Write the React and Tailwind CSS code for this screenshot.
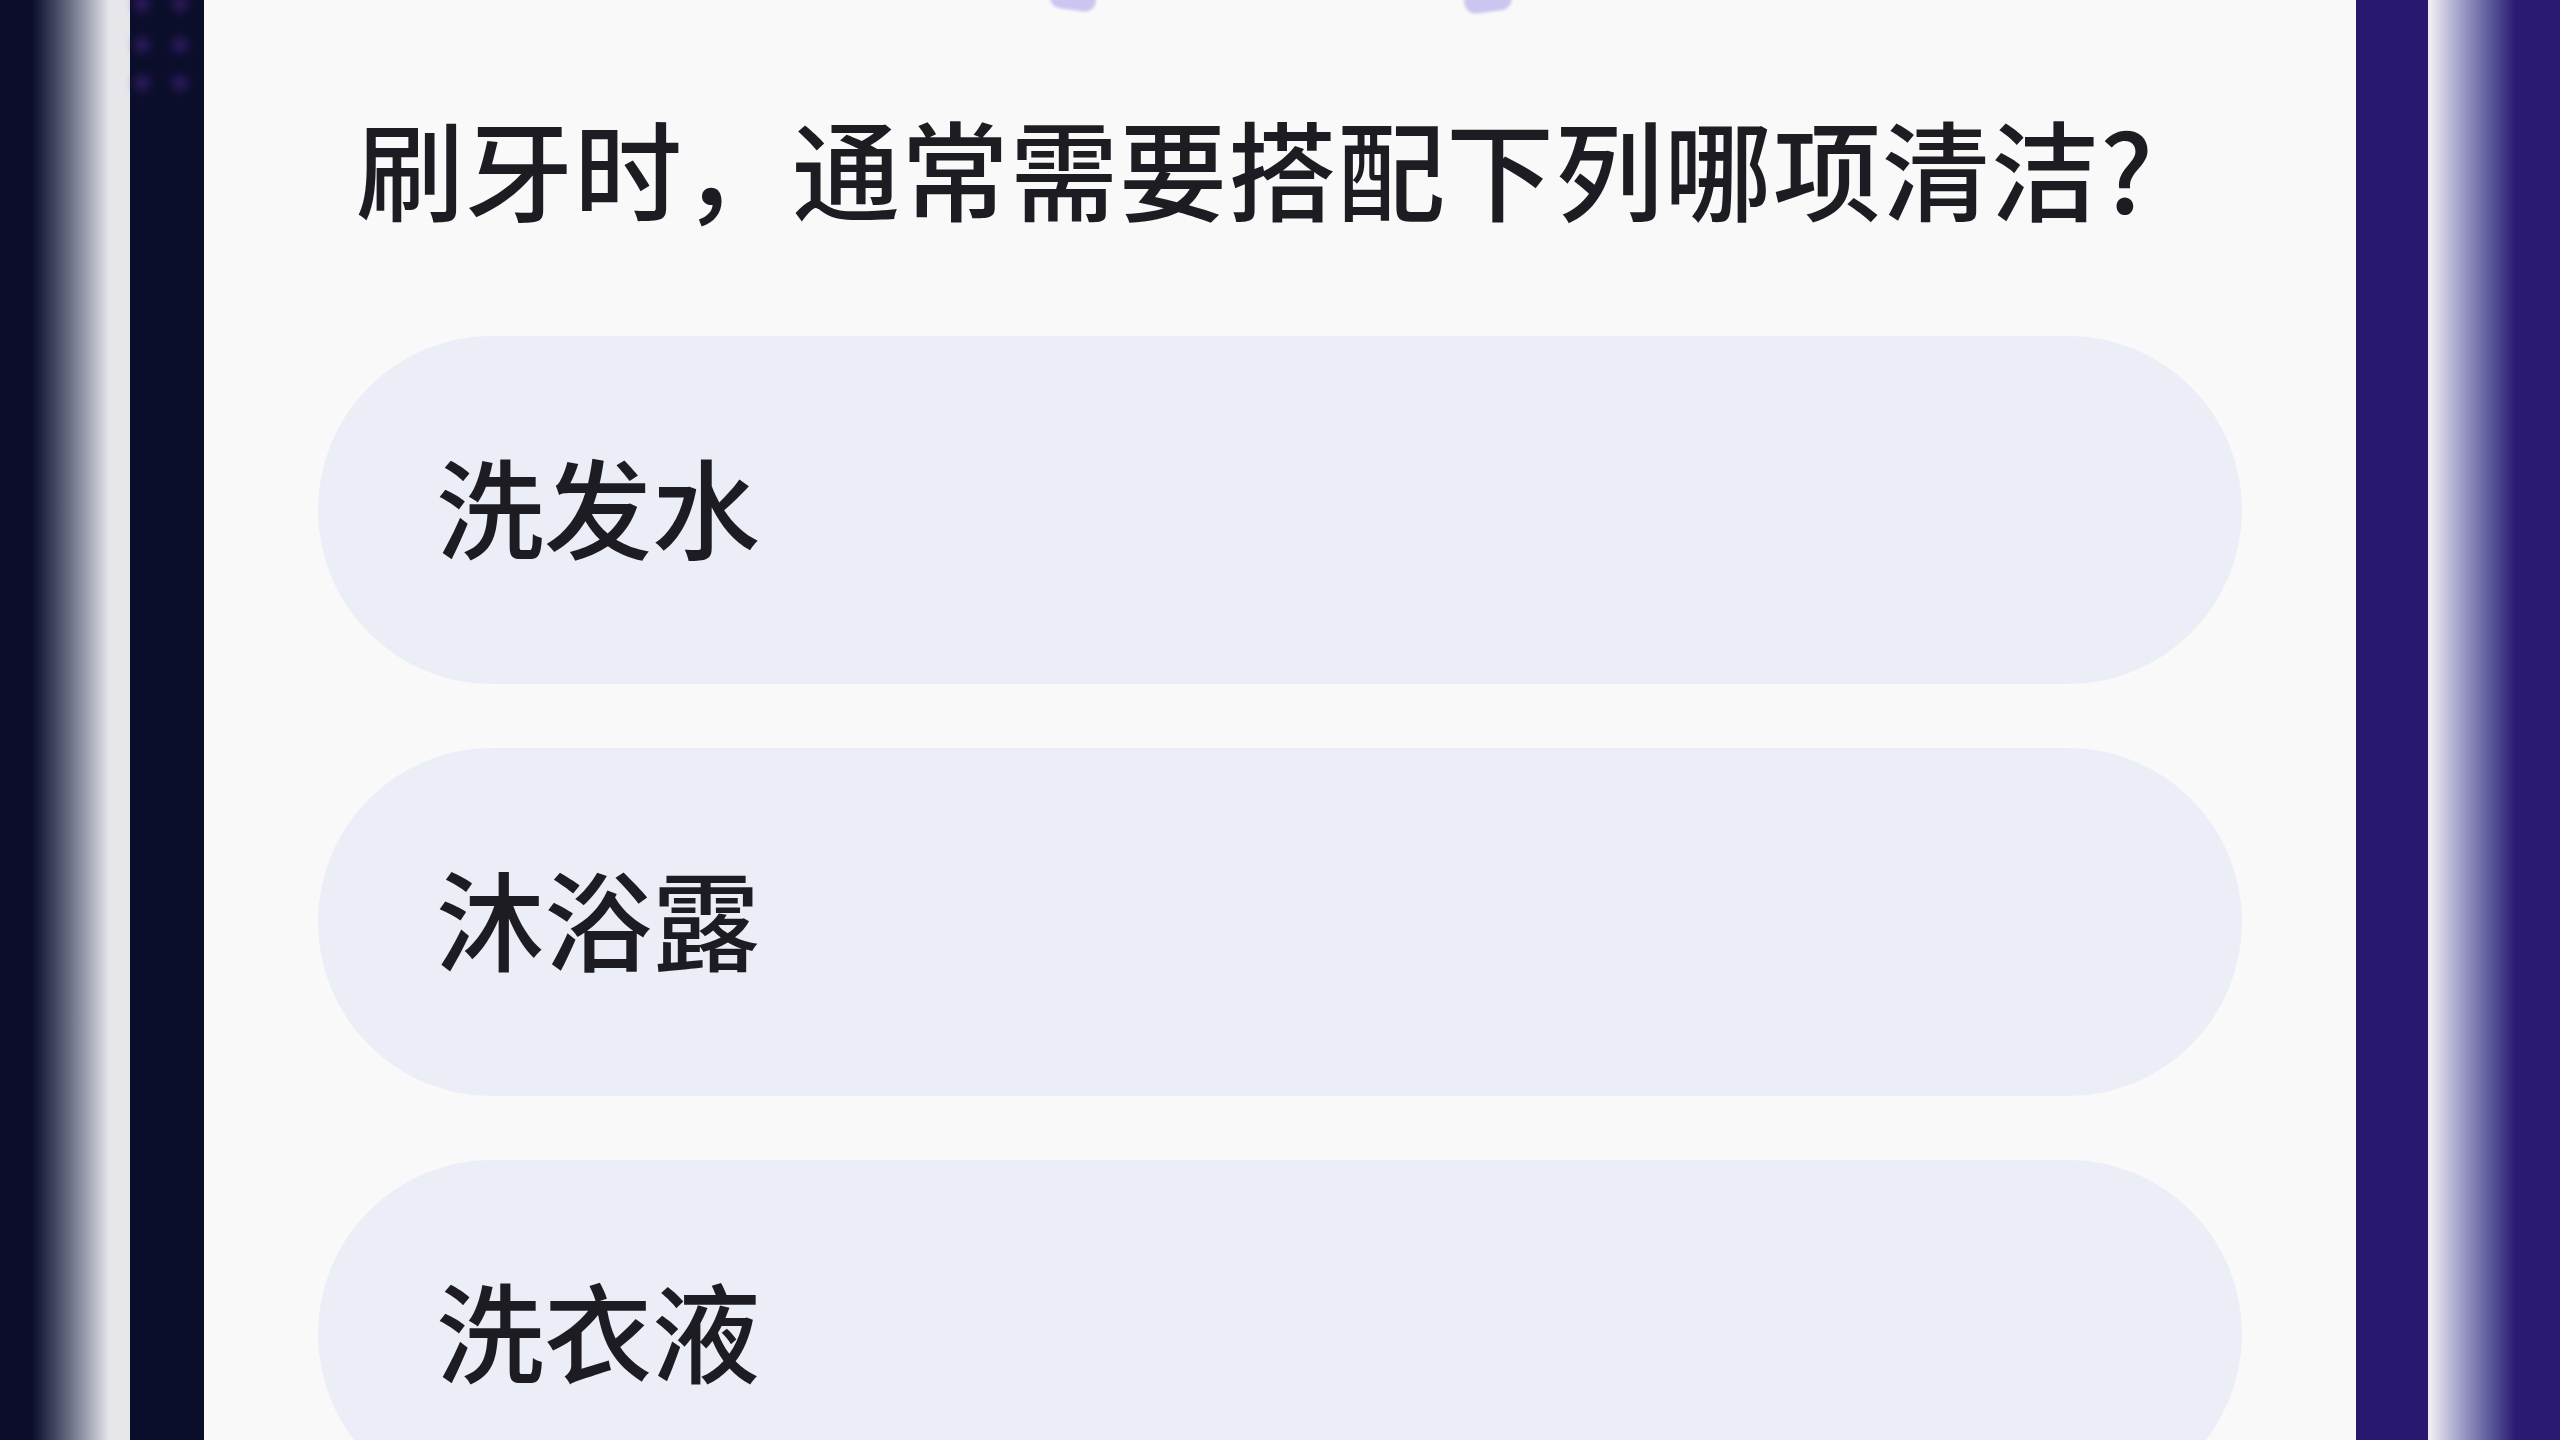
import React from 'react'

const options = ['洗发水', '沐浴露', '洗衣液']

const dots = [
  'left-[4px] top-[-4px]', 'left-[42px] top-[-4px]',
  'left-[4px] top-[37px]', 'left-[42px] top-[37px]',
  'left-[4px] top-[75px]', 'left-[42px] top-[75px]',
]

export default function App() {
  return (
    <div className="w-[2560px] h-[1440px] flex overflow-hidden bg-[#0a0c2a] font-['Noto_Sans_CJK_SC','Noto_Sans',sans-serif]">
      {/* left backdrop */}
      <div className="w-[130px] shrink-0 bg-linear-to-r from-[#0a0c2a] from-[24%] to-[#e6e6eb] to-[84%]" />
      <div className="relative w-[74px] shrink-0 bg-[#0b0e2b]">
        {dots.map((pos) => (
          <div key={pos} className={`absolute ${pos} w-[16px] h-[16px] rounded-full bg-[#3d1f72] blur-[5px] opacity-70`} />
        ))}
      </div>

      {/* quiz card */}
      <div className="relative w-[2152px] shrink-0 bg-[#f9f9fa]">
        <div className="absolute left-[846px] top-[-12px] w-[46px] h-[22px] rounded-full bg-[#cbc6ef] rotate-[8deg] blur-[1.5px]" />
        <div className="absolute left-[1260px] top-[-12px] w-[48px] h-[24px] rounded-full bg-[#cbc6ef] -rotate-[8deg] blur-[1.5px]" />

        <h1 className="pt-[112px] pl-[152px] text-[108px] leading-none font-medium text-[#1c1c22] tracking-[1px]">
          刷牙时，通常需要搭配下列哪项清洁?
        </h1>

        <div className="mt-[116px] px-[114px] flex flex-col gap-[64px]">
          {options.map((opt) => (
            <div key={opt} className="h-[348px] shrink-0 rounded-full bg-[#ebedf7] flex items-center pl-[118px] pb-[12px]">
              <span className="text-[108px] leading-none font-medium text-[#1c1c22]">{opt}</span>
            </div>
          ))}
        </div>
      </div>

      {/* right backdrop */}
      <div className="w-[72px] shrink-0 bg-[#2a1870]" />
      <div className="flex-1 bg-linear-to-r from-[#eeebf3] from-[2%] to-[#2c1a72] to-[66%]" />
    </div>
  )
}
